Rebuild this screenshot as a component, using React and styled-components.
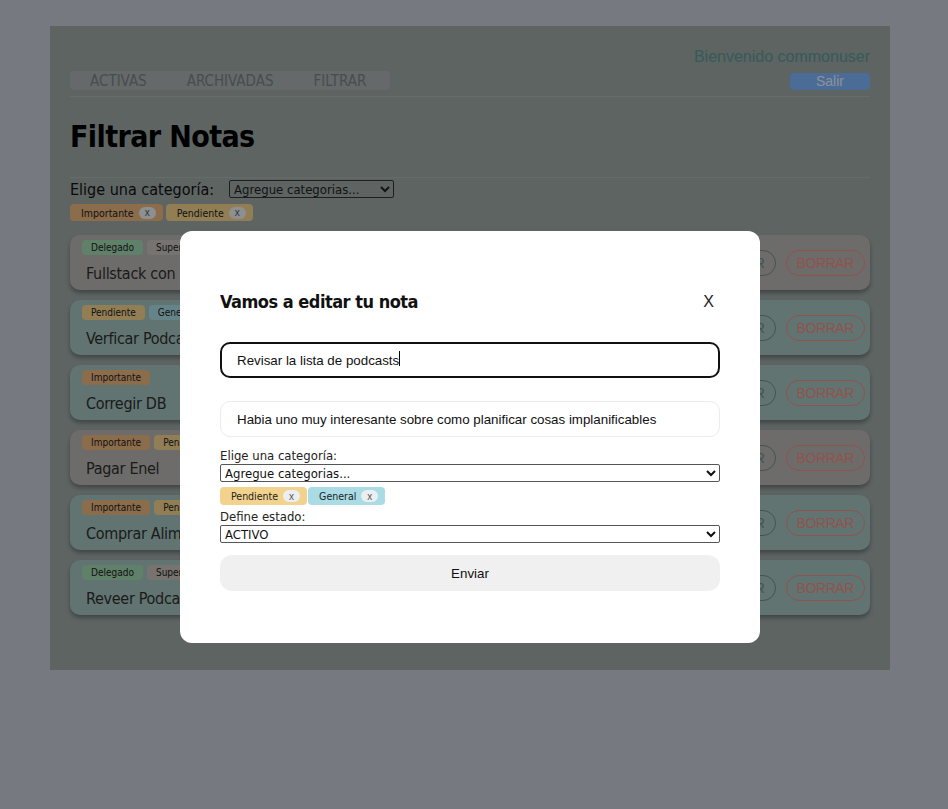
import styled, { createGlobalStyle } from "styled-components";

const GlobalStyle = createGlobalStyle`
  body {
    margin: 0;
    background: #c5cad4;
    font-family: "DejaVu Sans Condensed", "Noto Sans", sans-serif;
  }
`;

const tagColors = {
  Importante: "#e8b47e",
  Pendiente: "#f2d38e",
  General: "#a9dce4",
  Delegado: "#9ed5af",
  Superado: "#c6c0bd",
};

const notes = [
  { id: 1, title: "Fullstack con React", tags: ["Delegado", "Superado"], tone: "gray" },
  { id: 2, title: "Verficar Podcasts", tags: ["Pendiente", "General"], tone: "mint" },
  { id: 3, title: "Corregir DB", tags: ["Importante"], tone: "mint" },
  { id: 4, title: "Pagar Enel", tags: ["Importante", "Pendiente"], tone: "gray" },
  { id: 5, title: "Comprar Alimentos", tags: ["Importante", "Pendiente"], tone: "mint" },
  { id: 6, title: "Reveer Podcasts", tags: ["Delegado", "Superado"], tone: "mint" },
];

const App = () => {
  return (
    <>
      <GlobalStyle />
      <StyledPage>
        <Header>
          <Nav>
            <NavItem>ACTIVAS</NavItem>
            <NavItem>ARCHIVADAS</NavItem>
            <NavItem>FILTRAR</NavItem>
          </Nav>
          <UserBox>
            <Welcome>Bienvenido commonuser</Welcome>
            <LogoutButton>Salir</LogoutButton>
          </UserBox>
        </Header>
        <Title>Filtrar Notas</Title>
        <FilterRow>
          <label>Elige una categoría:</label>
          <TopSelect defaultValue="">
            <option value="">Agregue categorias...</option>
          </TopSelect>
        </FilterRow>
        <TagRow $gap={3}>
          <Chip $color={tagColors.Importante}>
            Importante <Remove>x</Remove>
          </Chip>
          <Chip $color={tagColors.Pendiente}>
            Pendiente <Remove>x</Remove>
          </Chip>
        </TagRow>
        <NoteList>
          {notes.map(({ id, title, tags, tone }) => (
            <NoteCard key={id} $tone={tone}>
              <NoteBody>
                <CardTags>
                  {tags.map((t) => (
                    <CardTag key={t} $color={tagColors[t]}>
                      {t}
                    </CardTag>
                  ))}
                </CardTags>
                <NoteTitle>{title}</NoteTitle>
              </NoteBody>
              <Actions>
                <PillButton $color="#6f8c88">ARCHIVAR</PillButton>
                <PillButton $color="#ee8a82">BORRAR</PillButton>
              </Actions>
            </NoteCard>
          ))}
        </NoteList>
      </StyledPage>

      <Overlay>
        <Modal>
          <ModalHeader>
            <h2>Vamos a editar tu nota</h2>
            <Close>X</Close>
          </ModalHeader>
          <InputWrap>
            <TextInput $focused defaultValue="Revisar la lista de podcasts" />
            <Caret />
          </InputWrap>
          <TextInput defaultValue="Habia uno muy interesante sobre como planificar cosas implanificables" />
          <Field>
            <FieldLabel>Elige una categoría:</FieldLabel>
            <FullSelect defaultValue="">
              <option value="">Agregue categorias...</option>
            </FullSelect>
            <TagRow $gap={1} $top={5}>
              <Chip $color={tagColors.Pendiente} $h={18}>
                Pendiente <Remove>x</Remove>
              </Chip>
              <Chip $color={tagColors.General} $h={18}>
                General <Remove>x</Remove>
              </Chip>
            </TagRow>
            <FieldLabel $top={4}>Define estado:</FieldLabel>
            <FullSelect defaultValue="ACTIVO">
              <option value="ACTIVO">ACTIVO</option>
              <option value="ARCHIVADO">ARCHIVADO</option>
            </FullSelect>
          </Field>
          <SubmitButton>Enviar</SubmitButton>
        </Modal>
      </Overlay>
    </>
  );
};

const StyledPage = styled.div`
  width: 800px;
  margin: 26px 0 0 50px;
  padding: 20px 20px 55px 20px;
  background: #9ba7a4;
`;

const Header = styled.div`
  display: flex;
  justify-content: space-between;
  align-items: flex-end;
  padding: 2px 0 6px 0;
  border-bottom: 1px solid #a9b6b4;
`;

const Nav = styled.div`
  display: flex;
  height: 19px;
  align-items: center;
  padding-right: 4px;
  background: #a8b0b0;
  border-radius: 4px;
`;

const NavItem = styled.span`
  padding: 0 20px;
  font-size: 15px;
  color: #778083;
`;

const UserBox = styled.div`
  display: flex;
  flex-direction: column;
  align-items: flex-end;
  gap: 7px;
`;

const Welcome = styled.div`
  font-family: "Liberation Sans", Arial, sans-serif;
  font-size: 16px;
  line-height: 18px;
  color: #5a9696;
`;

const LogoutButton = styled.button`
  width: 80px;
  height: 17px;
  padding: 0;
  border: none;
  border-radius: 4px;
  background: #7cb4fa;
  color: #eaf2ff;
  font-family: "Liberation Sans", Arial, sans-serif;
  font-size: 14px;
  line-height: 17px;
`;

const Title = styled.h1`
  margin: 0;
  padding: 20px 0 20px 0;
  font-size: 30px;
  line-height: 40px;
  letter-spacing: -0.6px;
  font-weight: bold;
  color: #000;
  border-bottom: 1px solid #a9b6b4;
`;

const FilterRow = styled.div`
  display: flex;
  align-items: center;
  gap: 15px;
  height: 20px;
  margin-top: 1px;
  font-size: 16px;
  color: #111;
`;

const TopSelect = styled.select`
  width: 165px;
  height: 18px;
  padding: 0;
  border: 1px solid #333;
  border-radius: 2px;
  background: transparent;
  font-family: "DejaVu Sans Condensed", "Noto Sans", sans-serif;
  font-size: 13px;
  color: #222;
`;

const TagRow = styled.div`
  display: flex;
  gap: ${(p) => p.$gap}px;
  margin-top: ${(p) => p.$top ?? 5}px;
`;

const Chip = styled.span`
  display: inline-flex;
  align-items: center;
  gap: 5px;
  height: ${(p) => p.$h ?? 17}px;
  padding: 0 7px 0 11px;
  border-radius: 4px;
  background: ${(p) => p.$color};
  font-size: 10.5px;
  color: #222;
`;

const Remove = styled.span`
  display: inline-flex;
  align-items: center;
  justify-content: center;
  width: 17px;
  height: 12px;
  border-radius: 6px;
  background: #eceff1;
  font-family: "Liberation Sans", Arial, sans-serif;
  font-size: 10px;
  color: #555;
`;

const NoteList = styled.div`
  display: flex;
  flex-direction: column;
  gap: 10px;
  margin-top: 14px;
`;

const NoteCard = styled.div`
  display: flex;
  justify-content: space-between;
  align-items: center;
  height: 55px;
  box-sizing: border-box;
  padding: 5px 5px 0 12px;
  border-radius: 10px;
  background: ${(p) => (p.$tone === "gray" ? "#b7b5b1" : "#a3c2bc")};
  box-shadow: 0 3px 4px rgba(0, 0, 0, 0.3);
`;

const NoteBody = styled.div`
  align-self: flex-start;
  display: flex;
  flex-direction: column;
  align-items: flex-start;
`;

const CardTags = styled.div`
  display: flex;
  gap: 4px;
`;

const CardTag = styled.span`
  display: inline-flex;
  align-items: center;
  height: 15px;
  padding: 0 9px;
  border-radius: 4px;
  background: ${(p) => p.$color};
  font-size: 10px;
  color: #222;
`;

const NoteTitle = styled.div`
  margin: 9px 0 0 4px;
  font-size: 16px;
  line-height: 20px;
  letter-spacing: -0.3px;
  color: #2e2e2e;
`;

const Actions = styled.div`
  display: flex;
  gap: 10px;
  margin-top: -4px;
`;

const PillButton = styled.button`
  height: 26px;
  padding: 0 10px;
  border: 1px solid ${(p) => p.$color};
  border-radius: 13px;
  background: transparent;
  color: ${(p) => p.$color};
  font-family: "Liberation Sans", Arial, sans-serif;
  font-size: 14px;
  letter-spacing: -0.4px;
`;

const Overlay = styled.div`
  position: fixed;
  inset: 0;
  display: flex;
  justify-content: center;
  align-items: flex-start;
  padding: 231px 8px 0 0;
  background: rgba(0, 0, 0, 0.4);
`;

const Modal = styled.div`
  display: flex;
  flex-direction: column;
  width: 500px;
  padding: 60px 40px 52px 40px;
  border-radius: 12px;
  background: #fff;
`;

const ModalHeader = styled.div`
  display: flex;
  justify-content: space-between;
  align-items: center;
  & > h2 {
    margin: 0;
    font-size: 18px;
    line-height: 22px;
    letter-spacing: -0.5px;
    font-weight: bold;
    color: #111;
  }
`;

const Close = styled.span`
  margin-right: 6px;
  font-family: "Liberation Sans", Arial, sans-serif;
  font-size: 16px;
  color: #222;
`;

const InputWrap = styled.div`
  position: relative;
  display: flex;
  flex-direction: column;
`;

const Caret = styled.span`
  position: absolute;
  left: 179px;
  top: 38px;
  width: 1px;
  height: 15px;
  background: #000;
`;

const TextInput = styled.input`
  box-sizing: border-box;
  width: 100%;
  height: 36px;
  margin-top: ${(p) => (p.$focused ? 29 : 23)}px;
  padding: 0 ${(p) => (p.$focused ? 15 : 16)}px;
  border: ${(p) => (p.$focused ? "2px solid #111" : "1px solid #ececec")};
  border-radius: 10px;
  outline: none;
  font-family: "Liberation Sans", Arial, sans-serif;
  font-size: 13.33px;
  color: #111;
`;

const Field = styled.div`
  display: flex;
  flex-direction: column;
  margin-top: 11px;
`;

const FieldLabel = styled.div`
  margin-top: ${(p) => p.$top ?? 0}px;
  font-size: 13px;
  line-height: 16px;
  color: #222;
`;

const FullSelect = styled.select`
  width: 100%;
  height: 18px;
  padding: 0;
  border: 1px solid #555;
  border-radius: 2px;
  background: #fff;
  font-family: "DejaVu Sans Condensed", "Noto Sans", sans-serif;
  font-size: 13px;
  color: #111;
`;

const SubmitButton = styled.button`
  height: 36px;
  margin-top: 12px;
  border: none;
  border-radius: 12px;
  background: #f0f0f0;
  font-family: "Liberation Sans", Arial, sans-serif;
  font-size: 13.33px;
  color: #111;
`;

export default App;
